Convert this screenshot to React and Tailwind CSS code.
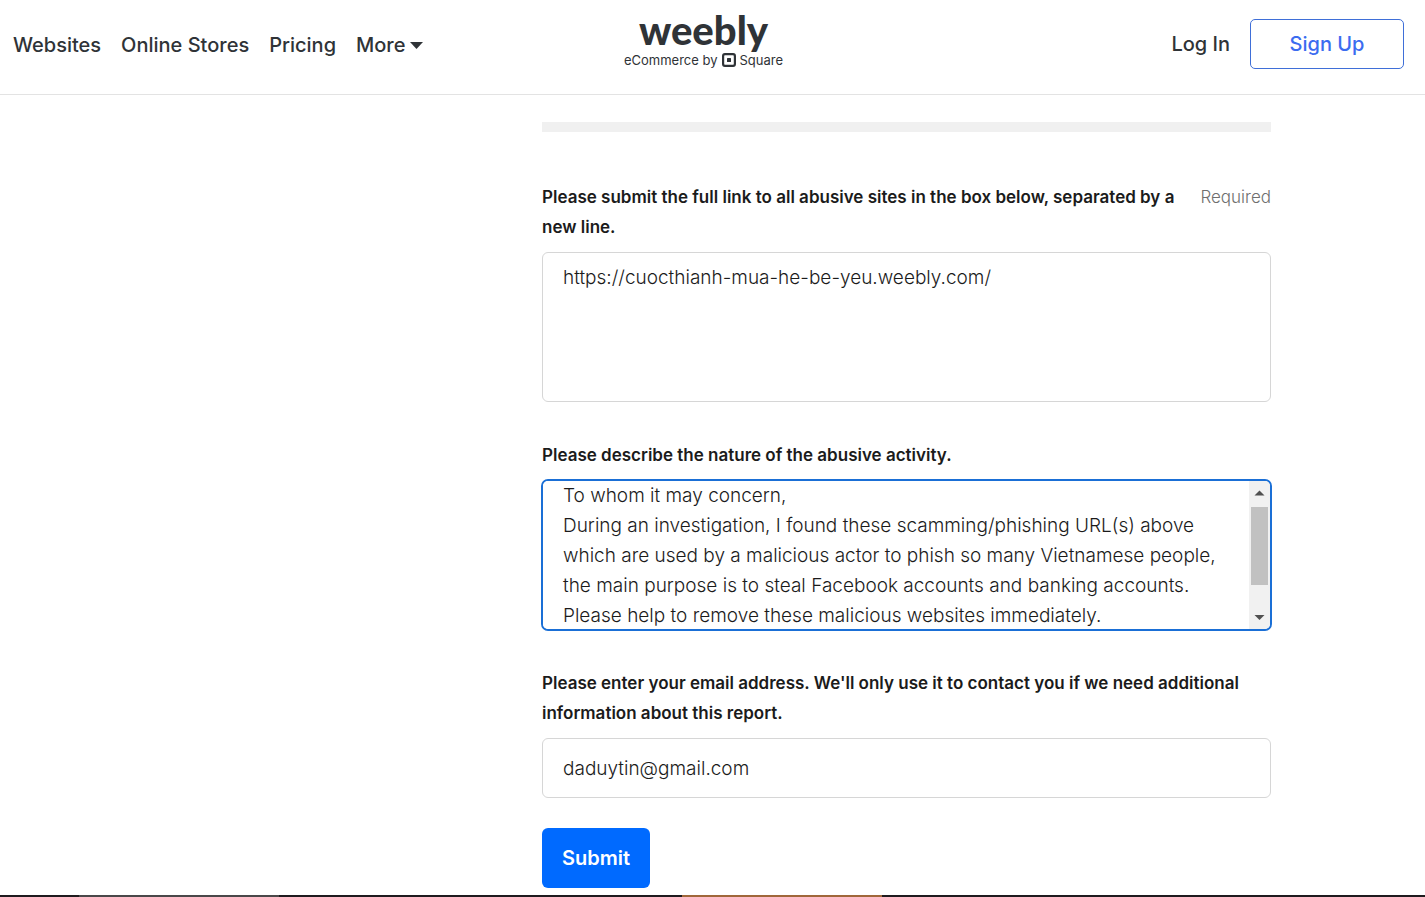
import React from "react";

const NAV = ["Websites", "Online Stores", "Pricing"];

function Logo() {
  return (
    <a href="#home" className="flex flex-col items-center gap-[2px] text-[#2f3337]">
      <span className="font-['Lato',sans-serif] text-[40px] leading-[40px] font-black">weebly</span>
      <span className="flex items-center gap-1 text-[13px] leading-4 font-normal">
        eCommerce by
        <svg width="14" height="14" viewBox="0 0 14 14" aria-hidden="true">
          <rect x="1.100" y="1.100" width="11.800" height="11.800" rx="1.800" fill="none" stroke="currentColor" strokeWidth="2.200" />
          <rect x="5" y="5" width="4" height="4" rx="0.500" fill="currentColor" />
        </svg>
        Square
      </span>
    </a>
  );
}

function Header() {
  return (
    <header className="grid h-[95px] shrink-0 grid-cols-[1fr_auto_1fr] border-b border-[#e3e3e3] text-[20px] leading-[30px] font-medium text-[#2f3337]">
      <nav className="flex items-center gap-5 self-start pt-[30px] pl-[13px]">
        {NAV.map((item) => (
          <a key={item} href="#nav">{item}</a>
        ))}
        <button type="button" className="flex items-center gap-[5px]">
          More
          <svg width="13" height="7" viewBox="0 0 13 7" aria-hidden="true">
            <path d="M0 0h13L6.500 7z" fill="currentColor" />
          </svg>
        </button>
      </nav>
      <div className="pt-[10px] pr-[18px]">
        <Logo />
      </div>
      <div className="flex items-center gap-5 self-start justify-self-end pt-[19px] pr-[21px]">
        <a href="#login">Log In</a>
        <button type="button" className="h-[50px] w-[154px] rounded-[5px] border border-[#3f6fd8] text-[#3b6cf0]">
          Sign Up
        </button>
      </div>
    </header>
  );
}

const LABEL = "text-[17px] leading-[30px] font-semibold text-[#1b1b1b]";
const FIELD_TEXT = "resize-none bg-white text-[19px] leading-[30px] font-[350] text-[#1b1b1b] outline-none";
const FIELD = `${FIELD_TEXT} block w-full rounded-md border border-[#d6d6d6] px-5`;

const MESSAGE = `To whom it may concern,
During an investigation, I found these scamming/phishing URL(s) above
which are used by a malicious actor to phish so many Vietnamese people,
the main purpose is to steal Facebook accounts and banking accounts.
Please help to remove these malicious websites immediately.`;

function ScrollTrack() {
  return (
    <div className="flex w-[21px] shrink-0 flex-col items-center bg-[#f1f1f1]" aria-hidden="true">
      <svg width="17" height="26" viewBox="0 0 17 26">
        <path d="M3.500 14.500h10l-5-5z" fill="#505050" />
      </svg>
      <div className="h-[78px] w-[17px] bg-[#c1c1c1]" />
      <svg className="mt-auto" width="17" height="26" viewBox="0 0 17 26">
        <path d="M3.500 12h10l-5 5z" fill="#505050" />
      </svg>
    </div>
  );
}

export default function App() {
  return (
    <div className="flex min-h-screen flex-col bg-white font-['Inter','Liberation_Sans',sans-serif]">
      <Header />
      <main className="grid flex-1 grid-cols-[388px_1fr] px-[154px]">
        <form className="col-start-2 pt-[27px]" onSubmit={(e) => e.preventDefault()}>
          <div className="h-[10px] bg-[#f0f0f0]" />

          <div className="mt-[50px] flex justify-between gap-4">
            <label htmlFor="links" className={LABEL}>
              Please submit the full link to all abusive sites in the box below, separated by a new line.
            </label>
            <span className="text-[17px] leading-[30px] font-light text-[#6f6f6f]">Required</span>
          </div>
          <textarea
            id="links"
            spellCheck={false}
            className={`${FIELD} mt-[10px] h-[150px] py-[10px]`}
            defaultValue="https://cuocthianh-mua-he-be-yeu.weebly.com/"
          />

          <label htmlFor="nature" className={`${LABEL} mt-[38px] block`}>
            Please describe the nature of the abusive activity.
          </label>
          <div className="-mx-px mt-[9px] flex h-[152px] overflow-hidden rounded-[7px] border-2 border-[#1a6fd6]">
            <textarea
              id="nature"
              spellCheck={false}
              className={`${FIELD_TEXT} block min-w-0 flex-1 overflow-hidden pl-5`}
              defaultValue={MESSAGE}
            />
            <ScrollTrack />
          </div>

          <label htmlFor="email" className={`${LABEL} mt-[37px] block`}>
            Please enter your email address. We'll only use it to contact you if we need additional information about this report.
          </label>
          <input id="email" type="email" className={`${FIELD} mt-[10px] h-[60px]`} defaultValue="daduytin@gmail.com" />

          <button type="submit" className="mt-[30px] h-[60px] rounded-md bg-[#006aff] px-5 text-[20px] font-semibold text-white">
            Submit
          </button>
        </form>
      </main>
      <footer className="flex h-[2px] shrink-0 bg-[#1f1b1e]">
        <div className="ml-[79px] w-[200px] bg-[#4a4849]" />
        <div className="ml-[403px] w-[200px] bg-[#a0673a]" />
      </footer>
    </div>
  );
}
